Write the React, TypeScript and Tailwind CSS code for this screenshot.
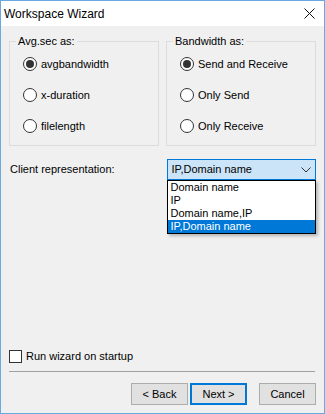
import React from "react";

const font = { fontFamily: '"Liberation Sans", Arial, sans-serif' };

function Radio({ checked, label }: { checked?: boolean; label: string }) {
  return (
    <div className="flex h-[31px] items-center">
      <span className="flex h-[14px] w-[14px] shrink-0 items-center justify-center rounded-full border border-[#333333] bg-white">
        {checked && <span className="h-[8px] w-[8px] rounded-full bg-[#333333]" />}
      </span>
      <span className="ml-[4px] text-[11px] leading-[14px] text-black">{label}</span>
    </div>
  );
}

function Group({ title, items }: { title: string; items: { label: string; checked?: boolean }[] }) {
  return (
    <div className="relative h-[105px] w-[150px] border border-[#dcdcdc] pl-[13px] pt-[6px]">
      <span className="absolute left-[6px] top-[-9px] bg-[#f0f0f0] px-[2px] text-[11px] leading-[16px] text-black">
        {title}
      </span>
      {items.map((it) => (
        <Radio key={it.label} label={it.label} checked={it.checked} />
      ))}
    </div>
  );
}

function Button({ label, primary }: { label: string; primary?: boolean }) {
  return (
    <div
      className={
        "flex h-[22px] w-[57px] items-center justify-center bg-[#e1e1e1] text-[11px] text-black " +
        (primary ? "border-2 border-[#0078d7]" : "border border-[#adadad]")
      }
    >
      {label}
    </div>
  );
}

export default function App() {
  return (
    <div
      className="relative flex h-[414px] w-[325px] flex-col border border-[#6aa8e2] bg-[#f0f0f0]"
      style={font}
    >
      {/* Title bar */}
      <div className="flex h-[25px] shrink-0 items-center justify-between bg-white pl-[3px] pr-[9px]">
        <span className="text-[12px] leading-[16px] text-black">Workspace Wizard</span>
        <svg width="11" height="11" viewBox="0 0 11 11">
          <path d="M0.5 0.5 L10.5 10.5 M10.5 0.5 L0.5 10.5" stroke="#111" strokeWidth="1" fill="none" />
        </svg>
      </div>

      {/* Content */}
      <div className="flex flex-1 flex-col px-[8px] pb-[8px] pt-[15px]">
        <div className="flex gap-[7px]">
          <Group
            title="Avg.sec as:"
            items={[{ label: "avgbandwidth", checked: true }, { label: "x-duration" }, { label: "filelength" }]}
          />
          <Group
            title="Bandwidth as:"
            items={[{ label: "Send and Receive", checked: true }, { label: "Only Send" }, { label: "Only Receive" }]}
          />
        </div>

        <div className="mt-[13px] flex">
          <div className="w-[159px] pl-[1px] text-[11px] leading-[21px] text-black">Client representation:</div>
          <div className="relative w-[149px]">
            <div className="flex h-[21px] items-center justify-between border border-[#0078d7] bg-[#cce4f7] pl-[3px] pr-[4px]">
              <span className="text-[11px] leading-[13px] text-black">IP,Domain name</span>
              <svg width="10" height="6" viewBox="0 0 10 6">
                <path d="M0.5 0.5 L5 5 L9.5 0.5" stroke="#333" strokeWidth="1" fill="none" />
              </svg>
            </div>
            <div className="absolute left-0 top-full z-10 w-[149px] border border-[#000000] bg-white shadow-[2px_2px_3px_rgba(0,0,0,0.25)]">
              {["Domain name", "IP", "Domain name,IP"].map((t) => (
                <div key={t} className="h-[13px] pl-[2px] text-[11px] leading-[13px] text-black">
                  {t}
                </div>
              ))}
              <div className="h-[13px] bg-[#0078d7] pl-[2px] text-[11px] leading-[13px] text-white">IP,Domain name</div>
            </div>
          </div>
        </div>

        <div className="flex-1" />

        <div className="flex h-[14px] items-center">
          <span className="h-[13px] w-[13px] border border-[#333333] bg-white" />
          <span className="ml-[4px] text-[11px] leading-[14px] text-black">Run wizard on startup</span>
        </div>

        <div className="mt-[8px] h-px w-[306px] bg-[#a0a0a0]" />

        <div className="mt-[11px] flex justify-end">
          <Button label="< Back" />
          <div className="w-[2px]" />
          <Button label="Next >" primary />
          <div className="w-[12px]" />
          <Button label="Cancel" />
        </div>
      </div>
    </div>
  );
}
